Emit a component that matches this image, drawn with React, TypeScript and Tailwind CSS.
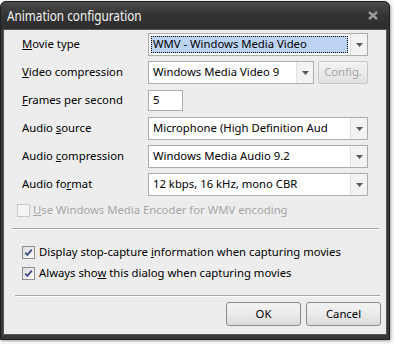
import React from "react";

const font = { fontFamily: '"Noto Sans", "Open Sans", sans-serif' };

function Arrow() {
  return (
    <svg width="7" height="4" viewBox="0 0 7 4">
      <path d="M0 0 H7 L3.5 4 Z" fill="#5a5a5a" />
    </svg>
  );
}

function Select({ text, width, selected }: { text: string; width: string; selected?: boolean }) {
  return (
    <div className={`${width} h-[23px] flex border border-[#acacac] bg-white`}>
      <div className="flex-1 flex items-center p-[2px] min-w-0">
        {selected ? (
          <div className="h-full w-full flex items-center pl-[1px] bg-[#bcd3f3] border border-dotted border-black text-black whitespace-nowrap overflow-hidden">
            {text}
          </div>
        ) : (
          <div className="pl-[2px] whitespace-nowrap overflow-hidden text-black">{text}</div>
        )}
      </div>
      <div className="w-[17px] flex items-center justify-center bg-[#f3f3f3] border-l border-[#e2e2e2]">
        <Arrow />
      </div>
    </div>
  );
}

function Label({ children }: { children: React.ReactNode }) {
  return <div className="w-[126px] text-black whitespace-nowrap">{children}</div>;
}

function CheckBox({ checked, disabled }: { checked?: boolean; disabled?: boolean }) {
  return (
    <div
      className={`w-[13px] h-[13px] border ${disabled ? "border-[#c8c8c8] bg-[#f4f4f4]" : "border-[#8e8f8f] bg-gradient-to-br from-[#dcdcdc] to-[#fbfbfb]"} flex items-center justify-center`}
    >
      {checked && (
        <svg width="9" height="9" viewBox="0 0 9 9">
          <path d="M1.2 4.6 L3.4 6.9 L7.8 1.6" stroke="#3d4f86" strokeWidth="1.8" fill="none" />
        </svg>
      )}
    </div>
  );
}

function Button({ children }: { children: React.ReactNode }) {
  return (
    <div className="w-[75px] h-[24px] flex items-center justify-center rounded-[3px] border border-[#8a8a8a] bg-gradient-to-b from-[#f3f3f3] via-[#ebebeb] to-[#d9d9d9] text-black">
      {children}
    </div>
  );
}

export default function App() {
  return (
    <div className="w-[394px] h-[344px] bg-[#fafafa] overflow-hidden" style={font}>
      <div className="mt-[1px] w-[390px] h-[339px] rounded-t-[6px] bg-[#383838] border border-[#1f1f1f] flex flex-col shadow-[1px_1px_3px_rgba(0,0,0,0.35)]">
        <div className="h-[27px] flex items-center justify-between pl-[6px] pr-[11px] bg-gradient-to-b from-[#4a4a4a] via-[#333333] to-[#2e2e2e] rounded-t-[6px]">
          <div className="text-[14px] text-[#f2f2f2] leading-none origin-left scale-x-[0.84] whitespace-nowrap mt-[1px]">Animation configuration</div>
          <svg width="10" height="9" viewBox="0 0 10 9">
            <path d="M1 1 L9 8 M9 1 L1 8" stroke="#9a9a9a" strokeWidth="2.4" />
          </svg>
        </div>
        <div className="mx-[2px] h-[306px] bg-[#ededed] border border-[#555] text-[11.3px] flex flex-col">
          <div className="pt-[3px] pl-[18px] flex flex-col gap-[5px]">
            <div className="h-[23px] flex items-center">
              <Label><u>M</u>ovie type</Label>
              <Select text="WMV - Windows Media Video" width="w-[220px]" selected />
            </div>
            <div className="h-[23px] flex items-center">
              <Label><u>V</u>ideo compression</Label>
              <Select text="Windows Media Video 9" width="w-[166px]" />
              <div className="ml-[4px] w-[50px] h-[23px] flex items-center justify-center border border-[#c8c8c8] rounded-[2px] bg-gradient-to-b from-[#f2f2f2] to-[#e2e2e2] text-[#a3a3a3]">
                Confi<u>g</u>.
              </div>
            </div>
            <div className="h-[23px] flex items-center">
              <Label><u>F</u>rames per second</Label>
              <div className="w-[35px] h-[21px] border border-[#acacac] bg-white flex items-center pl-[4px] text-black">5</div>
            </div>
            <div className="h-[23px] flex items-center">
              <Label>Audio <u>s</u>ource</Label>
              <Select text="Microphone (High Definition Aud" width="w-[220px]" />
            </div>
            <div className="h-[23px] flex items-center">
              <Label>Audio <u>c</u>ompression</Label>
              <Select text="Windows Media Audio 9.2" width="w-[220px]" />
            </div>
            <div className="h-[23px] flex items-center">
              <Label>Audio fo<u>r</u>mat</Label>
              <Select text="12 kbps, 16 kHz, mono CBR" width="w-[220px]" />
            </div>
          </div>
          <div className="mt-[8px] ml-[13px] h-[13px] flex items-center gap-[3px] text-[#a6a6a6]">
            <CheckBox disabled />
            <span><u>U</u>se Windows Media Encoder for WMV encoding</span>
          </div>
          <div className="mt-[11px] ml-[8px] mr-[7px] border-t border-[#a8a8a8] border-b border-b-white" />
          <div className="mt-[16px] ml-[18px] h-[13px] flex items-center gap-[4px] text-black">
            <CheckBox checked />
            <span>Display stop-capture <u>i</u>nformation when capturing movies</span>
          </div>
          <div className="mt-[8px] ml-[18px] h-[13px] flex items-center gap-[4px] text-black">
            <CheckBox checked />
            <span>Always sho<u>w</u> this dialog when capturing movies</span>
          </div>
          <div className="mt-[15px] ml-[11px] mr-[6px] border-t border-[#a8a8a8] border-b border-b-white" />
          <div className="mt-[5px] flex justify-end gap-[5px] pr-[5px]">
            <Button>OK</Button>
            <Button>Cancel</Button>
          </div>
        </div>
      </div>
    </div>
  );
}
